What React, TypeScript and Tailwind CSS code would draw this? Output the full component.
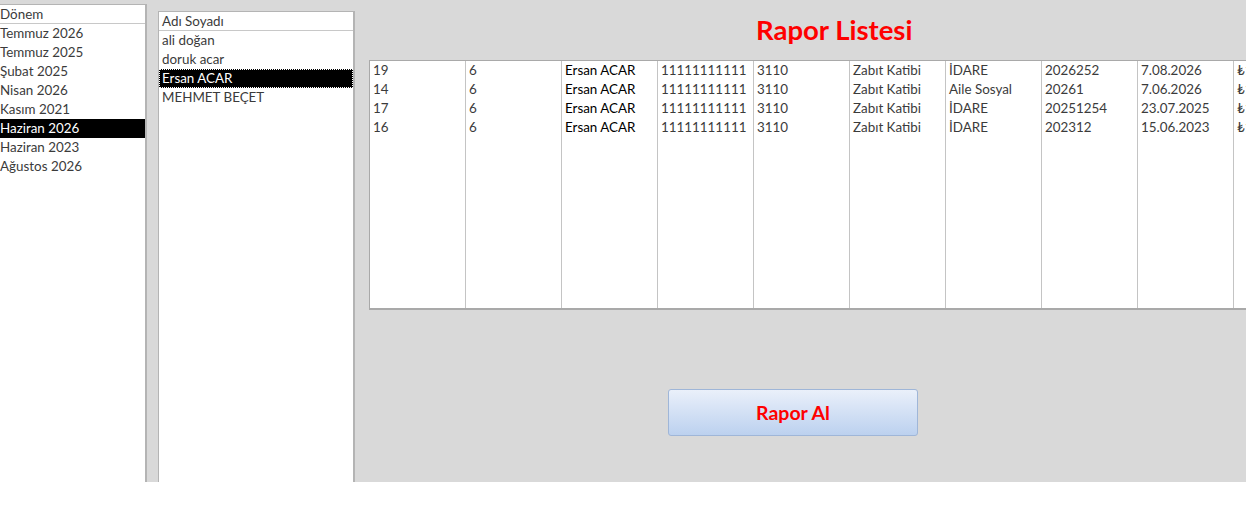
const DONEMLER = [
  "Temmuz 2026",
  "Temmuz 2025",
  "Şubat 2025",
  "Nisan 2026",
  "Kasım 2021",
  "Haziran 2026",
  "Haziran 2023",
  "Ağustos 2026",
];

const KISILER = ["ali doğan", "doruk acar", "Ersan ACAR", "MEHMET BEÇET"];

const RAPORLAR = [
  ["19", "6", "Ersan ACAR", "11111111111", "3110", "Zabıt Katibi", "İDARE", "2026252", "7.08.2026", "₺1.000,00"],
  ["14", "6", "Ersan ACAR", "11111111111", "3110", "Zabıt Katibi", "Aile Sosyal", "20261", "7.06.2026", "₺1.000,00"],
  ["17", "6", "Ersan ACAR", "11111111111", "3110", "Zabıt Katibi", "İDARE", "20251254", "23.07.2025", "₺1.000,00"],
  ["16", "6", "Ersan ACAR", "11111111111", "3110", "Zabıt Katibi", "İDARE", "202312", "15.06.2023", "₺1.000,00"],
];

const FONT = { fontFamily: "Lato, 'Open Sans', sans-serif" };

export default function App() {
  return (
    <div className="w-[1251px] h-[505px] bg-white" style={FONT}>
      <div className="flex w-[1246px] h-[482px] bg-[#d9d9d9] overflow-hidden">
        {/* Dönem listesi */}
        <div className="mt-[4px] w-[147px] shrink-0 bg-white border-t border-r-2 border-[#b4b4b4] text-[13.4px] text-[#3b3b3b]">
          <div className="h-[19px] leading-[19px] border-b border-[#c8c8c8]">Dönem</div>
          {DONEMLER.map((d) => (
            <div
              key={d}
              className={`h-[19px] leading-[19px] ${d === "Haziran 2026" ? "bg-black text-white" : ""}`}
            >
              {d}
            </div>
          ))}
        </div>

        {/* Kişi listesi */}
        <div className="ml-[11px] mt-[11px] w-[197px] shrink-0 bg-white border-t border-l border-r-2 border-[#b4b4b4] text-[13.4px] text-[#3b3b3b]">
          <div className="h-[19px] leading-[19px] pl-[3px] border-b border-[#c8c8c8]">Adı Soyadı</div>
          {KISILER.map((k) => (
            <div
              key={k}
              className={`h-[19px] leading-[17px] pl-[2px] ${
                k === "Ersan ACAR" ? "bg-black text-white border border-dotted border-white" : "border border-transparent"
              }`}
            >
              {k}
            </div>
          ))}
        </div>

        {/* Rapor alanı */}
        <div className="flex-1 min-w-0 flex flex-col">
          <h1 className="mt-[13px] ml-[401px] h-[34px] text-[27.5px] leading-[34px] font-bold text-[#ff0000]">
            Rapor Listesi
          </h1>
          <div className="mt-[13px] ml-[14px] h-[250px] flex bg-white border-t border-l border-b-2 border-[#a9a9a9] overflow-hidden">
            {RAPORLAR[0].map((_, col) => (
              <div
                key={col}
                className="w-[96px] shrink-0 border-r border-[#c4c4c4] pl-[3px] text-[13.4px]"
              >
                {RAPORLAR.map((row, i) => (
                  <div
                    key={i}
                    className={`h-[19px] leading-[19px] whitespace-nowrap ${col === 2 ? "text-black" : "text-[#3b3b3b]"}`}
                  >
                    {row[col]}
                  </div>
                ))}
              </div>
            ))}
          </div>
          <button className="mt-[79px] ml-[313px] w-[250px] h-[47px] rounded-[3px] border border-[#9fb6d8] bg-gradient-to-b from-[#eaf0fa] to-[#bcd1ef] text-[19.5px] font-bold text-[#ff0000]">
            Rapor Al
          </button>
        </div>
      </div>
    </div>
  );
}
